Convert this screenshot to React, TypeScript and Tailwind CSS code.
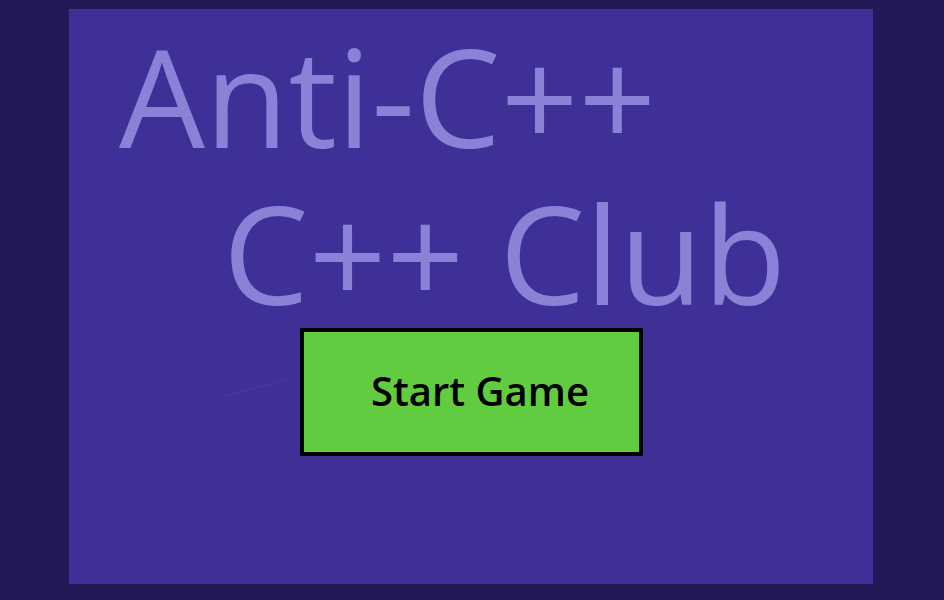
export default function App() {
  return (
    <div className="h-[600px] w-[944px] bg-[#221a56] pt-[9px] pl-[69px] font-['Open_Sans',sans-serif]">
      <div className="relative h-[575px] w-[804px] bg-[#3f3098]">
        {/* title */}
        <div className="pt-[8px] text-[136px] font-medium leading-[157px] text-[#8b82d8]">
          <div className="pl-[50px] whitespace-nowrap">Anti-C++</div>
          <div className="pl-[154px] whitespace-nowrap">C++ Club</div>
        </div>

        {/* faint stroke left of the button */}
        <svg className="absolute left-[151px] top-[366px] h-[24px] w-[80px]" viewBox="0 0 80 24">
          <path d="M0 22 L70 4" stroke="#4a3ca3" strokeWidth={1} fill="none" />
        </svg>

        <div className="ml-[231px] mt-[-3px]">
          <button className="flex h-[128px] w-[343px] items-center border-4 border-black bg-[#62cc40] pl-[67px] pb-[3px] text-[40px] font-semibold text-black">
            Start Game
          </button>
        </div>
      </div>
    </div>
  )
}
